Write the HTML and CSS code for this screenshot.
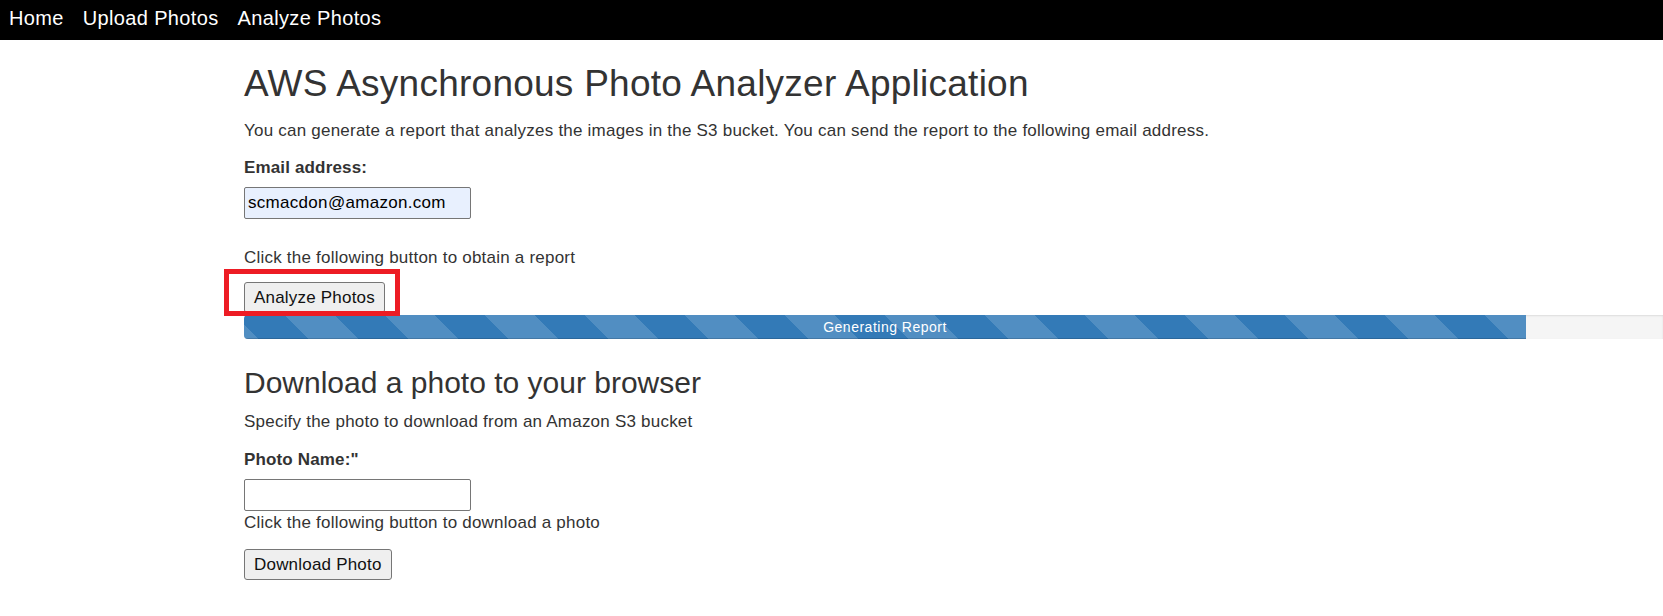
FILE: index.html
```html
<!DOCTYPE html>
<html lang="en">
<head>
<meta charset="utf-8">
<title>AWS Asynchronous Photo Analyzer Application</title>
<link rel="stylesheet" href="styles.css">
</head>
<body>
<nav class="topnav">
  <a class="nav-link" href="#">Home</a>
  <a class="nav-link" href="#">Upload Photos</a>
  <a class="nav-link" href="#">Analyze Photos</a>
</nav>
<main class="content">
  <h1 class="title">AWS Asynchronous Photo Analyzer Application</h1>
  <p class="text intro">You can generate a report that analyzes the images in the S3 bucket. You can send the report to the following email address.</p>
  <label class="field-label email-label" for="email">Email address:</label>
  <input class="field email-field" id="email" type="text" value="scmacdon@amazon.com">
  <p class="text hint">Click the following button to obtain a report</p>
  <div class="btn-wrap">
    <button class="btn" type="button">Analyze Photos</button>
    <span class="annotation"></span>
  </div>
  <div class="progress">
    <div class="progress-bar" style="width: 90.35%;">Generating Report</div>
  </div>
  <h2 class="subtitle">Download a photo to your browser</h2>
  <p class="text spec">Specify the photo to download from an Amazon S3 bucket</p>
  <label class="field-label photo-label" for="photo">Photo Name:"</label>
  <input class="field photo-field" id="photo" type="text">
  <p class="text after-input">Click the following button to download a photo</p>
  <button class="btn download-btn" type="button">Download Photo</button>
</main>
</body>
</html>
```

FILE: styles.css
```css
html, body {
  margin: 0;
  padding: 0;
  background: #fff;
}

body {
  font-family: "Liberation Sans", Arial, Helvetica, sans-serif;
  color: #333;
  font-size: 17px;
}

.topnav {
  height: 40px;
  background: #000;
  display: flex;
  align-items: flex-start;
  gap: 19px;
  padding-left: 9px;
}

.nav-link {
  color: #fff;
  text-decoration: none;
  font-size: 20px;
  line-height: 36px;
  letter-spacing: 0.35px;
}

.content {
  padding-left: 244px;
  padding-bottom: 20px;
}

.title {
  margin: 24px 0 0;
  font-size: 37px;
  font-weight: 400;
  line-height: 40px;
  letter-spacing: 0.25px;
  color: #333;
}

.text {
  margin: 0;
  font-size: 17px;
  line-height: 22px;
  letter-spacing: 0.22px;
  color: #333;
}

.intro {
  margin-top: 16px;
}

.field-label {
  display: block;
  font-weight: 700;
  font-size: 17px;
  line-height: 22px;
  letter-spacing: 0.15px;
  color: #333;
}

.email-label {
  margin-top: 15px;
}

.field {
  display: block;
  box-sizing: border-box;
  width: 227px;
  height: 32px;
  margin: 8px 0 0;
  padding: 0 3px;
  border: 1px solid #767676;
  border-radius: 2px;
  font-family: "Liberation Sans", Arial, sans-serif;
  font-size: 17px;
  letter-spacing: 0.3px;
  color: #000;
  background: #fff;
  outline: none;
}

.email-field {
  background: #e8f0fe;
}

.hint {
  margin-top: 28px;
}

.btn-wrap {
  position: relative;
  margin-top: 13px;
  height: 31px;
}

.btn {
  display: block;
  box-sizing: border-box;
  height: 31px;
  margin: 0;
  padding: 0 9px;
  border: 1px solid #767676;
  border-radius: 3px;
  background: #efefef;
  font-family: "Liberation Sans", Arial, sans-serif;
  font-size: 17px;
  letter-spacing: 0.2px;
  color: #111;
}

.annotation {
  position: absolute;
  left: -20px;
  top: -13px;
  width: 176px;
  height: 47px;
  box-sizing: border-box;
  border: 5px solid #ed1c24;
  pointer-events: none;
}

.progress {
  margin-top: 2px;
  height: 24px;
  background: #f5f5f5;
  border-radius: 4px 0 0 4px;
  box-shadow: inset 0 1px 2px rgba(0, 0, 0, 0.1);
  overflow: hidden;
}

.progress-bar {
  height: 100%;
  background-color: #337ab7;
  background-image: linear-gradient(45deg,
    rgba(255, 255, 255, 0.15) 25%, transparent 25%,
    transparent 50%, rgba(255, 255, 255, 0.15) 50%,
    rgba(255, 255, 255, 0.15) 75%, transparent 75%, transparent);
  background-size: 100px 100px;
  background-position: 41px 0;
  box-shadow: inset 0 -1px 0 rgba(0, 0, 0, 0.15);
  color: #fff;
  font-size: 14px;
  line-height: 24px;
  letter-spacing: 0.5px;
  text-align: center;
}

.subtitle {
  margin: 27px 0 0;
  font-size: 30px;
  font-weight: 400;
  line-height: 33px;
  color: #333;
}

.spec {
  margin-top: 12px;
}

.photo-label {
  margin-top: 16px;
}

.after-input {
  margin-top: 1px;
}

.download-btn {
  margin-top: 15px;
}
```
